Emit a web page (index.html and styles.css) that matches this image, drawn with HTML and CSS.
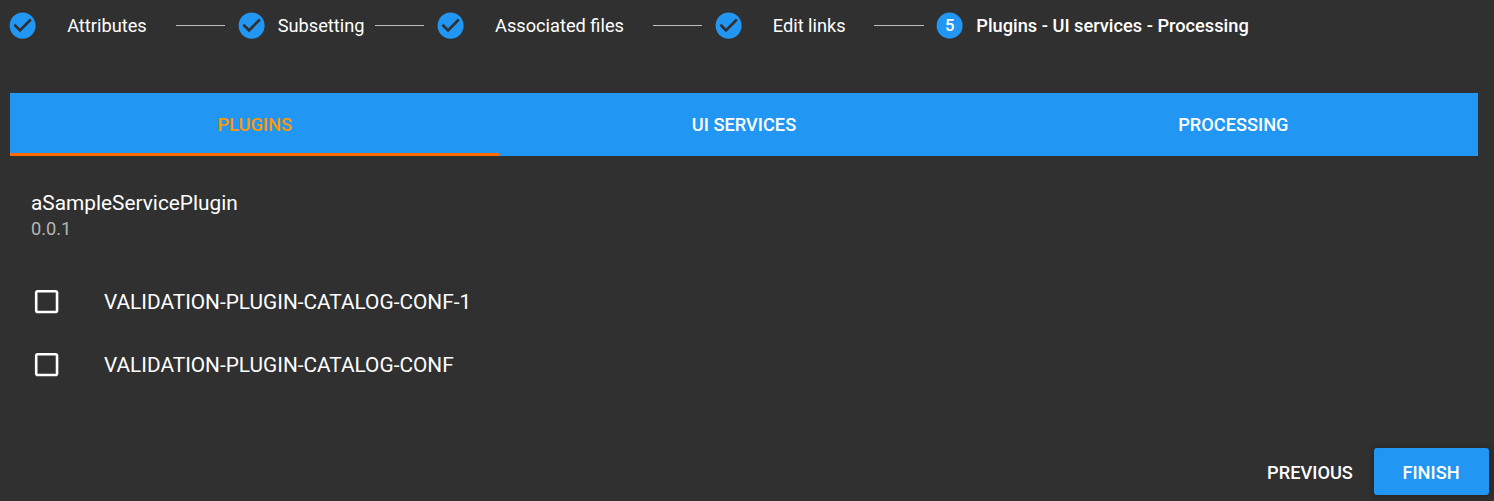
FILE: index.html
```html
<!DOCTYPE html>
<html lang="en">
<head>
<meta charset="utf-8">
<title>Plugins</title>
<link rel="stylesheet" href="styles.css">
</head>
<body>
<main class="page">
  <nav class="stepper">
    <div class="step step-attributes"><svg class="mark" viewBox="0 0 24 24"><path d="M12 2C6.48 2 2 6.48 2 12s4.48 10 10 10 10-4.48 10-10S17.52 2 12 2zm-2 15l-5-5 1.41-1.41L10 14.17l7.59-7.59L19 8l-9 9z"/></svg><span class="label">Attributes</span></div>
    <i class="line"></i>
    <div class="step step-subsetting"><svg class="mark" viewBox="0 0 24 24"><path d="M12 2C6.48 2 2 6.48 2 12s4.48 10 10 10 10-4.48 10-10S17.52 2 12 2zm-2 15l-5-5 1.41-1.41L10 14.17l7.59-7.59L19 8l-9 9z"/></svg><span class="label">Subsetting</span></div>
    <i class="line"></i>
    <div class="step step-files"><svg class="mark" viewBox="0 0 24 24"><path d="M12 2C6.48 2 2 6.48 2 12s4.48 10 10 10 10-4.48 10-10S17.52 2 12 2zm-2 15l-5-5 1.41-1.41L10 14.17l7.59-7.59L19 8l-9 9z"/></svg><span class="label">Associated files</span></div>
    <i class="line"></i>
    <div class="step step-links"><svg class="mark" viewBox="0 0 24 24"><path d="M12 2C6.48 2 2 6.48 2 12s4.48 10 10 10 10-4.48 10-10S17.52 2 12 2zm-2 15l-5-5 1.41-1.41L10 14.17l7.59-7.59L19 8l-9 9z"/></svg><span class="label">Edit links</span></div>
    <i class="line line-last"></i>
    <div class="step step-plugins"><svg class="mark" viewBox="0 0 24 24"><circle cx="12" cy="12" r="10"/><text class="number" x="12" y="16.3" text-anchor="middle">5</text></svg><span class="label current">Plugins - UI services - Processing</span></div>
  </nav>
  <div class="tabs">
    <div class="tab active">PLUGINS</div>
    <div class="tab">UI SERVICES</div>
    <div class="tab">PROCESSING</div>
  </div>
  <section class="card">
    <h1 class="title">aSampleServicePlugin</h1>
    <p class="version">0.0.1</p>
    <div class="option"><svg class="box" viewBox="0 0 24 24"><path d="M19 5v14H5V5h14m0-2H5c-1.1 0-2 .9-2 2v14c0 1.1.9 2 2 2h14c1.1 0 2-.9 2-2V5c0-1.1-.9-2-2-2z"/></svg><span class="name">VALIDATION-PLUGIN-CATALOG-CONF-1</span></div>
    <div class="option"><svg class="box" viewBox="0 0 24 24"><path d="M19 5v14H5V5h14m0-2H5c-1.1 0-2 .9-2 2v14c0 1.1.9 2 2 2h14c1.1 0 2-.9 2-2V5c0-1.1-.9-2-2-2z"/></svg><span class="name">VALIDATION-PLUGIN-CATALOG-CONF</span></div>
  </section>
  <footer class="actions">
    <button class="button">PREVIOUS</button>
    <button class="button primary">FINISH</button>
  </footer>
</main>
</body>
</html>
```
FILE: styles.css
```css
* { box-sizing: border-box; }
body { margin: 0; background: #303030; color: #fff; font-family: Roboto, sans-serif; }
.page { display: flex; flex-direction: column; height: 501px; overflow: hidden; }
.stepper { display: flex; align-items: center; height: 51px; padding-left: 7px; }
.step { display: flex; align-items: center; flex: none; font-size: 18.23px; white-space: nowrap; }
.step-attributes { width: 169px; }
.step-subsetting { width: 139px; }
.step-files { width: 218px; }
.step-links { width: 161px; }
.line { flex: none; width: 49px; height: 1px; background: #bdbdbd; margin-right: 11px; }
.line-last { width: 50px; margin-right: 10px; }
.mark { width: 31.25px; height: 31.25px; flex: none; fill: #2196f3; }
.label { margin-left: 28.9px; }
.step-subsetting .label { margin-left: 10.4px; }
.step-files .label { margin-left: 28.75px; }
.step-links .label { margin-left: 28.5px; }
.label.current { margin-left: 11.1px; font-weight: 500; }
.number { fill: #fff; font-size: 12.8px; font-weight: 500; }
.tabs { display: grid; grid-template-columns: repeat(3, 1fr); height: 63px; margin: 42px 16px 0 10px; background: #2196f3; }
.tab { display: flex; align-items: center; justify-content: center; font-size: 18.23px; font-weight: 500; border-bottom: 3px solid transparent; padding-top: 3px; }
.tab.active { color: #ff9800; border-bottom-color: #ff6d00; }
.card { padding: 32px 31px 0; }
.title { margin: 0; font-size: 20.83px; font-weight: 400; line-height: 30px; }
.version { margin: 0 0 31px; font-size: 18.23px; line-height: 21px; color: #b4b4b4; }
.option { display: flex; align-items: center; height: 63px; }
.box { width: 31.25px; height: 31.25px; fill: #fff; }
.name { margin-left: 41.75px; font-size: 20.83px; }
.actions { display: flex; justify-content: flex-end; margin-top: auto; padding: 0 5px 6px 0; }
.button { width: 128px; height: 47px; padding: 2px 0 0; border: 0; background: none; color: #fff; font: 500 18.23px Roboto, sans-serif; }
.primary { width: 115px; padding-right: 1px; background: #2196f3; border-radius: 3px; box-shadow: 0 1px 7px rgba(0, 0, 0, .16), 0 1px 5px rgba(0, 0, 0, .16); }
```
